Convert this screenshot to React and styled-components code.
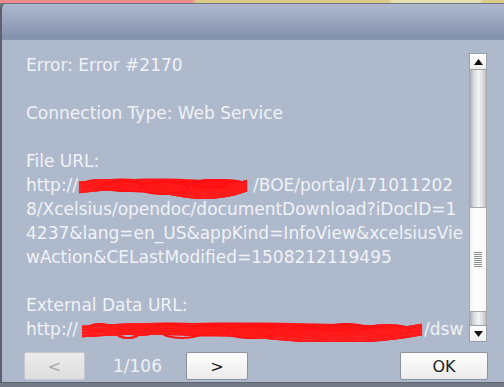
import React from 'react';
import styled, { createGlobalStyle } from 'styled-components';

const GlobalStyle = createGlobalStyle`
  html, body {
    margin: 0;
    padding: 0;
    background: #737a85;
  }
`;

const Page = styled.div`
  width: 504px;
  height: 387px;
  overflow: hidden;
  display: flex;
  flex-direction: column;
  background: #737a85;
  font-family: "DejaVu Sans", Verdana, sans-serif;
`;

const TopStrip = styled.div`
  height: 3px;
  flex-shrink: 0;
  background: linear-gradient(90deg, #ec8a8c 0 38%, #dccb86 39% 77%, #e9e0b2 78% 95%, #dccb86 96%);
`;

const Dialog = styled.div`
  height: 380px;
  flex-shrink: 0;
  display: flex;
  flex-direction: column;
  background: #afb9cc;
  border-left: 2px solid #5b6170;
  border-top: 1px solid #6e7486;
  border-bottom: 1px solid #5f6571;
  border-top-left-radius: 6px;
  box-sizing: border-box;
`;

const Header = styled.div`
  height: 35px;
  flex-shrink: 0;
  background: linear-gradient(#aeb8cd, #8390ad);
  border-bottom: 1px solid #8a96b0;
  border-top-left-radius: 5px;
`;

const Body = styled.div`
  display: flex;
  padding: 13px 17px 0 24px;
`;

const TextArea = styled.div`
  flex: 1;
  height: 289px;
  overflow: hidden;
  color: #eff2f7;
  font-size: 17px;
  line-height: 24px;
`;

const Line = styled.div`
  white-space: nowrap;
  height: 24px;
`;

const Redacted = styled.span`
  position: relative;
  display: inline-block;
  width: ${p => p.$w}px;
  height: 16px;
  vertical-align: middle;
`;

const Scribble = styled.svg`
  position: absolute;
  left: ${p => p.$left}px;
  top: -3px;
  overflow: visible;
`;

const Scrollbar = styled.div`
  width: 18px;
  height: 289px;
  display: flex;
  flex-direction: column;
`;

const ArrowButton = styled.div`
  height: 17px;
  flex-shrink: 0;
  box-sizing: border-box;
  border: 1px solid #9aa0a8;
  background: linear-gradient(#ffffff, #eeeeee);
  display: flex;
  align-items: center;
  justify-content: center;
`;

const Track = styled.div`
  flex: 1;
  display: flex;
  flex-direction: column;
  background: linear-gradient(90deg, #9c9ea2, #d6d7d9 25%, #f4f4f4 55%, #d0d1d3 85%, #a0a2a6);
  padding-top: ${p => p.$top}px;
  padding-bottom: ${p => p.$bottom}px;
`;

const Thumb = styled.div`
  flex: 1;
  box-sizing: border-box;
  border: 1px solid #a6a8ac;
  background: linear-gradient(90deg, #f2f2f2, #ffffff 40%, #f6f6f6);
  display: flex;
  align-items: center;
  justify-content: center;
`;

const Grip = styled.div`
  width: 8px;
  height: 15px;
  background: repeating-linear-gradient(#8d8f93 0 1px, transparent 1px 2px);
`;

const Footer = styled.div`
  display: flex;
  align-items: center;
  padding: 10px 16px 0 22px;
`;

const Button = styled.div`
  width: ${p => p.$w}px;
  height: 28px;
  box-sizing: border-box;
  border: 1px solid ${p => (p.$disabled ? '#c4c8ce' : '#8c929c')};
  border-radius: 2px;
  background: ${p => (p.$disabled ? 'linear-gradient(#ebebeb, #dedede)' : 'linear-gradient(#ffffff, #ebebeb)')};
  color: ${p => (p.$disabled ? '#a4a8ae' : '#202020')};
  font-size: 16px;
  display: flex;
  align-items: center;
  justify-content: center;
`;

const PageCount = styled.div`
  color: #eef1f6;
  font-size: 17px;
  margin: 0 24px 0 28px;
`;

const Spacer = styled.div`
  flex: 1;
`;

const BottomStrip = styled.div`
  flex: 1;
  background: #737a85;
`;

const Triangle = ({ down }) => (
  <svg width="9" height="6" viewBox="0 0 9 6">
    <path d={down ? 'M0 0 L9 0 L4.5 6 Z' : 'M0 6 L9 6 L4.5 0 Z'} fill="#111" />
  </svg>
);

// hand-drawn looking red redaction mark
const RedScribble = ({ w, left }) => {
  const strokes = [];
  for (let i = 0; i < 12; i++) {
    const y = 5 + (i % 4) * 3;
    const x = (i * 41) % Math.max(w - 40, 1);
    strokes.push(
      <ellipse
        key={'e' + i}
        cx={x + 18}
        cy={11 + ((i % 3) - 1) * 2}
        rx={12 + (i % 4) * 4}
        ry={4 + (i % 3)}
        fill="none"
        stroke="#ff1010"
        strokeWidth="2"
      />
    );
    strokes.push(
      <path
        key={'p' + i}
        d={`M0 ${y + 3} Q ${w * 0.3} ${y - 4} ${w * 0.55} ${y + 5} T ${w} ${y + 1}`}
        fill="none"
        stroke="#ff1a1a"
        strokeWidth="2.5"
      />
    );
  }
  return (
    <Scribble $left={left} width={w + 4} height="22" viewBox={`0 0 ${w + 4} 22`}>
      <path
        d={`M2 11 C ${w * 0.2} 1, ${w * 0.6} 2, ${w} 8 C ${w * 0.8} 20, ${w * 0.3} 21, 2 11 Z`}
        fill="#ff1515"
      />
      {strokes}
    </Scribble>
  );
};

const App = () => (
  <Page>
    <GlobalStyle />
    <TopStrip />
    <Dialog>
      <Header />
      <Body>
        <TextArea>
          <Line>Error: Error #2170</Line>
          <Line />
          <Line>Connection Type: Web Service</Line>
          <Line />
          <Line>File URL:</Line>
          <Line>
            http://
            <Redacted $w={175}>
              <RedScribble w={168} left={1} />
            </Redacted>
            /BOE/portal/171011202
          </Line>
          <Line>8/Xcelsius/opendoc/documentDownload?iDocID=1</Line>
          <Line>4237&amp;lang=en_US&amp;appKind=InfoView&amp;xcelsiusVie</Line>
          <Line>wAction&amp;CELastModified=1508212119495</Line>
          <Line />
          <Line>External Data URL:</Line>
          <Line>
            http://
            <Redacted $w={346}>
              <RedScribble w={340} left={4} />
            </Redacted>
            /dsw
          </Line>
        </TextArea>
        <Scrollbar>
          <ArrowButton>
            <Triangle />
          </ArrowButton>
          <Track $top={137} $bottom={13}>
            <Thumb>
              <Grip />
            </Thumb>
          </Track>
          <ArrowButton>
            <Triangle down />
          </ArrowButton>
        </Scrollbar>
      </Body>
      <Footer>
        <Button $w={61} $disabled>&lt;</Button>
        <PageCount>1/106</PageCount>
        <Button $w={62}>&gt;</Button>
        <Spacer />
        <Button $w={88}>OK</Button>
      </Footer>
    </Dialog>
    <BottomStrip />
  </Page>
);

export default App;
